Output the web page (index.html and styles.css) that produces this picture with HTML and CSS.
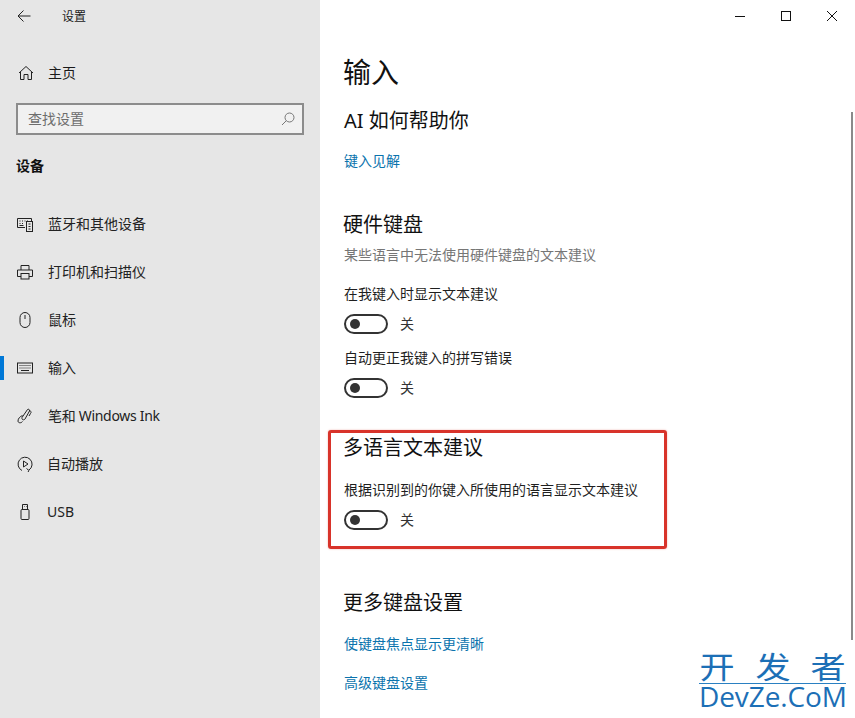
FILE: index.html
```html
<!DOCTYPE html>
<html lang="zh-CN">
<head>
<meta charset="utf-8">
<title>设置</title>
<link rel="stylesheet" href="styles.css">
</head>
<body>
<div class="window">
  <aside class="sidebar">
    <div class="titlebar">
      <svg class="back-icon" width="16" height="16" viewBox="0 0 16 16"><path d="M14.500 8H2M7.500 2.500 2 8l5.500 5.500"/></svg>
      <span class="app-title">设置</span>
    </div>
    <div class="home-row">
      <svg class="icon" width="16" height="16" viewBox="0 0 16 16"><path d="M1 8 8 1.500 15 8M2.500 7v7.500h3.500V9.500h4v5h3.500V7"/></svg>
      <span>主页</span>
    </div>
    <div class="search">
      <span>查找设置</span>
      <svg class="search-icon" width="14" height="14" viewBox="0 0 14 14"><circle cx="8.500" cy="5.500" r="4.500"/><path d="M5.300 8.700 1 13"/></svg>
    </div>
    <div class="group-title">设备</div>
    <nav class="nav">
      <div class="nav-item">
        <svg class="icon" width="16" height="16" viewBox="0 0 16 16"><path d="M8 11.500H.5v-9h14v2.500"/><rect x="9.500" y="5.500" width="6" height="10"/><path d="M2.500 5h1M5 5h1M7.500 5h1M10 5h1M2.500 7.500h1M5 7.500h1M2.500 9.500h4M11.500 8h2M11.500 10.500h2M11.500 13h2"/></svg>
        <span>蓝牙和其他设备</span>
      </div>
      <div class="nav-item">
        <svg class="icon" width="16" height="16" viewBox="0 0 16 16"><path d="M4 6V1.500h8V6M4 12.500H.5V6h15v6.500H12"/><rect x="4" y="9.500" width="8" height="5.500"/></svg>
        <span>打印机和扫描仪</span>
      </div>
      <div class="nav-item">
        <svg class="icon" width="16" height="16" viewBox="0 0 16 16"><rect x="3" y=".5" width="10" height="15" rx="5"/><path d="M8 3v4"/></svg>
        <span>鼠标</span>
      </div>
      <div class="nav-item is-active">
        <svg class="icon" width="16" height="16" viewBox="0 0 16 16"><rect x=".5" y="3" width="15" height="10"/><path d="M2.500 5.500h1M4.500 5.500h1M6.500 5.500h1M8.500 5.500h1M10.500 5.500h1M12.500 5.500h1M2.500 8h1M4.500 8h1M6.500 8h1M8.500 8h1M10.500 8h1M12.500 8h1M4 10.500h8"/></svg>
        <span>输入</span>
      </div>
      <div class="nav-item">
        <svg class="icon" width="16" height="16" viewBox="0 0 16 16"><path d="M5 9.500 10.500 1.500c1-.8 2.500.2 2 1.500L8 11c-1 1.500-3.500 1-3-1.500ZM12 2.500c1.500.5 3 1 1.500 3L12 8M5.500 7.500C3 8.500 1 10.500 1 13c0 2 3 2.500 4.500.5"/></svg>
        <span class="condensed">笔和 Windows Ink</span>
      </div>
      <div class="nav-item">
        <svg class="icon" width="16" height="16" viewBox="0 0 16 16"><path d="M5 14.500A7 7 0 1 1 12 14M9.500 12.500 12 14.500l-1 1.500"/><path d="M6.500 5v6L11 8Z"/></svg>
        <span class="tight">自动播放</span>
      </div>
      <div class="nav-item">
        <svg class="icon" width="16" height="16" viewBox="0 0 16 16"><rect x="4" y="5.500" width="8" height="10" rx="1"/><path d="M5.500 5.500V.5h5v5M7 2.500h.5M9 2.500h.5"/></svg>
        <span class="tight">USB</span>
      </div>
    </nav>
  </aside>
  <main class="content">
    <div class="window-controls">
      <svg width="46" height="32" viewBox="0 0 46 32"><path d="M18 16.500h10"/></svg>
      <svg width="46" height="32" viewBox="0 0 46 32"><rect x="18.500" y="11.500" width="9" height="9"/></svg>
      <svg width="46" height="32" viewBox="0 0 46 32"><path d="m18 11 10 10M28 11 18 21"/></svg>
    </div>
    <h1 class="page-title">输入</h1>
    <h2 class="heading first">AI 如何帮助你</h2>
    <a class="link link-a">键入见解</a>
    <h2 class="heading heading-hw">硬件键盘</h2>
    <p class="muted">某些语言中无法使用硬件键盘的文本建议</p>
    <p class="label label-a">在我键入时显示文本建议</p>
    <div class="toggle-row"><span class="toggle"></span><span>关</span></div>
    <p class="label label-b">自动更正我键入的拼写错误</p>
    <div class="toggle-row"><span class="toggle"></span><span>关</span></div>
    <h2 class="heading heading-ml">多语言文本建议</h2>
    <p class="label label-c">根据识别到的你键入所使用的语言显示文本建议</p>
    <div class="toggle-row"><span class="toggle"></span><span>关</span></div>
    <h2 class="heading heading-more">更多键盘设置</h2>
    <a class="link link-b">使键盘焦点显示更清晰</a>
    <a class="link link-c">高级键盘设置</a>
  </main>
  <div class="highlight"></div>
  <div class="scrollbar"></div>
  <div class="watermark">
    <div class="wm-cn"><span>开</span><span>发</span><span>者</span></div>
    <div class="wm-en">DevZe.CoM</div>
  </div>
</div>
</body>
</html>
```
FILE: styles.css
```css
* { box-sizing: border-box; }
html, body { margin: 0; padding: 0; }
body {
  width: 855px;
  height: 718px;
  overflow: hidden;
  background: #fff;
  color: #1a1a1a;
  font-family: "Noto Sans", "Noto Sans CJK SC", sans-serif;
  font-size: 14px;
  line-height: 20px;
}
.window { position: relative; display: flex; width: 855px; height: 718px; overflow: hidden; }

.sidebar { width: 320px; height: 718px; flex: none; background: #e6e6e6; }
.titlebar { display: flex; align-items: center; height: 34px; padding-left: 16px; }
.back-icon { fill: none; stroke: #222; stroke-width: 1; margin: -2px 30px 0 0; }
.app-title { font-size: 12px; }
.home-row { display: flex; align-items: center; gap: 14px; height: 20px; margin-top: 29px; padding-left: 18px; }
.icon { flex: none; fill: none; stroke: #222; stroke-width: 1; }
.search {
  display: flex; align-items: center; justify-content: space-between;
  width: 288px; height: 32px; margin: 20px 0 0 16px; padding: 0 7px 0 10px;
  background: #f1f1f1; border: 2px solid #8c8c8c; color: #6d6d6d;
}
.search-icon { fill: none; stroke: #777; stroke-width: 1; }
.group-title { margin-top: 21px; padding-left: 16px; font-weight: 700; color: #111; }
.nav { margin-top: 24px; }
.nav-item { position: relative; display: flex; align-items: center; gap: 15px; height: 48px; padding-left: 17px; color: #222; }
.nav-item .tight { margin-left: -1px; }
.nav-item .condensed { letter-spacing: -.3px; }
.nav-item.is-active::before {
  content: ""; position: absolute; left: 0; top: 12px; width: 4px; height: 24px; background: #0078d7;
}

.content { position: relative; flex: 1; padding: 52px 0 0 24px; }
.window-controls { position: absolute; top: 0; right: 0; display: flex; }
.window-controls svg { display: block; fill: none; stroke: #111; stroke-width: 1; }
.page-title { margin: 0 0 0 -1px; font-size: 28px; line-height: 40px; font-weight: 400; color: #111; }
.heading { margin: 0 0 0 -1px; font-size: 20px; line-height: 28px; font-weight: 400; color: #111; }
.heading.first { margin-top: 15px; margin-left: 0; }
.heading-hw { margin-top: 40px; }
.heading-ml { margin-top: 36px; }
.heading-more { margin-top: 59px; }
.link { display: block; color: #0a73ad; }
.link-a { margin-top: 16px; }
.link-b { margin-top: 17px; }
.link-c { margin-top: 19px; }
.muted { margin: 6px 0 0; color: #767676; }
.label { margin: 0; color: #1f1f1f; }
.label-a { margin-top: 19px; }
.label-b { margin-top: 14px; }
.label-c { margin-top: 18px; }
.toggle-row { display: flex; align-items: center; gap: 12px; height: 20px; margin-top: 10px; color: #333; }
.toggle { position: relative; display: block; width: 44px; height: 20px; border: 2px solid #333; border-radius: 10px; }
.toggle::after {
  content: ""; position: absolute; left: 4px; top: 3px; width: 10px; height: 10px; border-radius: 50%; background: #333;
}

.highlight {
  position: absolute; left: 328px; top: 430px; width: 339px; height: 119px;
  border: 3px solid #d8332a; border-radius: 3px;
  box-shadow: 0 0 2px rgba(216, 51, 42, .4);
}
.scrollbar { position: absolute; left: 851px; top: 112px; width: 2px; height: 528px; background: #8a8a8a; }
.watermark { position: absolute; left: 699px; top: 650px; width: 147px; height: 60px; color: #1c6fb6; }
.wm-cn {
  display: flex; justify-content: space-between; height: 34px; padding: 0 3px;
  border-bottom: 1px solid #2a80c2;
  font-size: 30px; line-height: 34px;
}
.wm-cn span { display: block; transform: scaleX(1.17); }
.wm-en { font-size: 28px; line-height: 24px; white-space: nowrap; letter-spacing: -.1px; font-family: "Open Sans", "Noto Sans", sans-serif; }
```
